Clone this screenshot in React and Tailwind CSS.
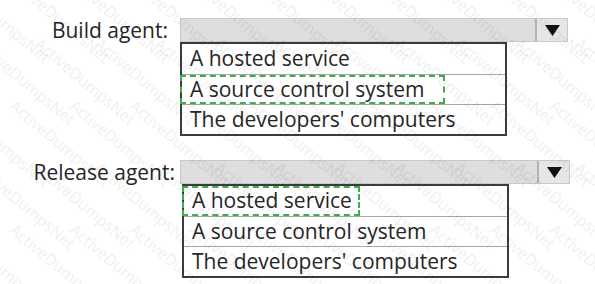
import React from 'react';

const marks = [];
for (let r = 0; r < 6; r++) {
  for (let c = 0; c < 11; c++) {
    marks.push({ x: c * 60 - 40 + (r % 2) * 25, y: r * 62 - 30 });
  }
}

const Dropdown = ({ label, labelPad, listShift, barWidth, options, selected, boxWidth }) => (
  <div className="flex items-start">
    <div
      className="w-[180px] h-[24px] flex items-center justify-end text-[21px] leading-none text-[#262626]"
      style={{ paddingRight: labelPad }}
    >
      {label}
    </div>
    <div className="flex flex-col">
      {/* closed select bar */}
      <div className="h-[24px] flex border border-[#c9c9c9] bg-[#dedede]" style={{ width: barWidth }}>
        <div className="flex-1" />
        <div className="w-[32px] h-full border-l-2 border-[#b4b4b4] bg-[#e6e6e6] flex items-center justify-center">
          <svg width="15" height="11" viewBox="0 0 15 11">
            <path d="M0 0 L15 0 L7.5 11 Z" fill="#111" />
          </svg>
        </div>
      </div>
      {/* options list */}
      <div
        className="w-[327px] border-2 border-[#3c3c3c] bg-white flex flex-col"
        style={{ marginLeft: listShift }}
      >
        {options.map((opt, i) => (
          <div
            key={opt}
            className={`h-[30px] flex items-stretch ${i > 0 ? 'border-t border-[#a6a6a6]' : ''}`}
          >
            {i === selected ? (
              <span
                className="h-full flex items-center pl-[8px] border-2 border-dashed border-[#3fae49] -ml-[2px] whitespace-nowrap"
                style={{ width: boxWidth }}
              >
                {opt}
              </span>
            ) : (
              <span className="h-full flex items-center pl-[8px] whitespace-nowrap">{opt}</span>
            )}
          </div>
        ))}
      </div>
    </div>
  </div>
);

export default function App() {
  const options = ['A hosted service', 'A source control system', "The developers' computers"];
  return (
    <div className="w-[595px] h-[284px] bg-white relative overflow-hidden font-['Open_Sans',sans-serif] text-[21px] text-[#262626]">
      <div className="pt-[18px] flex flex-col gap-[24px]">
        <Dropdown
          label="Build agent:"
          labelPad={12}
          listShift={0}
          barWidth={388}
          options={options}
          selected={1}
          boxWidth={265}
        />
        <Dropdown
          label="Release agent:"
          labelPad={5}
          listShift={2}
          barWidth={390}
          options={options}
          selected={0}
          boxWidth={178}
        />
      </div>

      {/* watermark overlay */}
      <div className="absolute inset-0 pointer-events-none">
        {marks.map((m, i) => (
          <span
            key={i}
            className="absolute text-[16px] text-[#000] opacity-[0.06] whitespace-nowrap rotate-[40deg] origin-top-left font-['Open_Sans',sans-serif]"
            style={{ left: m.x, top: m.y }}
          >
            ActiveDumpsNet
          </span>
        ))}
      </div>
    </div>
  );
}
